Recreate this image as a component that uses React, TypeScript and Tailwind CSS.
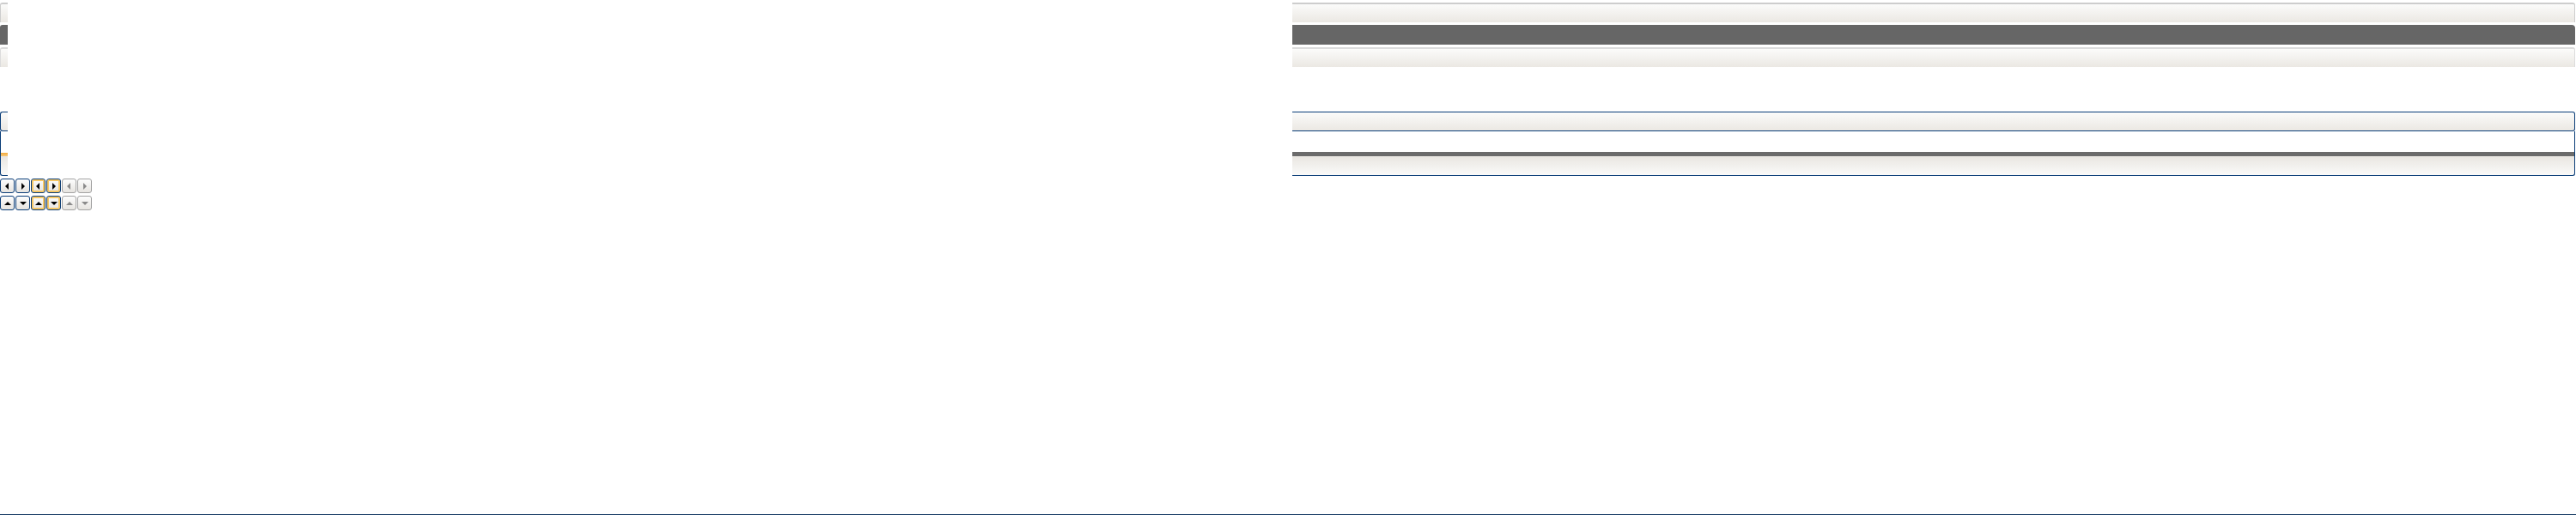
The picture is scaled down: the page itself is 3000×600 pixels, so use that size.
import React from "react";

// sprite-like strips: left cap + long bar
const light = "bg-gradient-to-b from-[#fbfbfa] to-[#ebe8e3]";
const lightUp = "bg-gradient-to-b from-[#e9e6e1] to-[#fafaf9]";
const navy = "border-[#0a3d78]";

type Dir = "left" | "right" | "up" | "down";
type Tone = "blue" | "orange" | "gray";

const Arrow: React.FC<{ dir: Dir; color: string }> = ({ dir, color }) => {
  const pts: Record<Dir, string> = {
    left: "6,2 6,10 2,6",
    right: "3,2 3,10 7,6",
    up: "1,8 9,8 5,4",
    down: "1,4 9,4 5,8",
  };
  return (
    <svg width="10" height="12" viewBox="0 0 10 12">
      <polygon points={pts[dir]} fill={color} />
    </svg>
  );
};

const ArrowButton: React.FC<{ dir: Dir; tone: Tone }> = ({ dir, tone }) => {
  const frame =
    tone === "gray"
      ? "border-[#a3a3a3]"
      : "border-[#0a3d78]";
  const inner = tone === "orange" ? "ring-2 ring-inset ring-[#f6c766]" : "";
  return (
    <div
      className={`w-[17px] h-[17px] border rounded-[3px] ${frame} ${inner} bg-gradient-to-b from-[#fdfdfd] to-[#e6e4e0] flex items-center justify-center`}
    >
      <Arrow dir={dir} color={tone === "gray" ? "#8a8a8a" : "#000"} />
    </div>
  );
};

const App: React.FC = () => {
  return (
    <div className="w-[3000px] h-[600px] bg-white flex flex-col">
      <div className="pt-[3px] flex flex-col gap-[3px]">
        {/* grey tabs */}
        <div className="flex h-[23px]">
          <div className={`w-[9px] border-t-2 border-l border-[#cdcdcd] rounded-tl-[3px] ${light}`} />
          <div className="w-[1496px]" />
          <div className={`flex-1 mr-[1px] border-t-2 border-r border-[#cdcdcd] rounded-tr-[3px] ${light}`} />
        </div>
        <div className="flex h-[23px]">
          <div className="w-[9px] bg-[#666666] rounded-tl-[3px]" />
          <div className="w-[1496px]" />
          <div className="flex-1 mr-[1px] bg-[#666666] rounded-tr-[4px]" />
        </div>
        <div className="flex h-[23px]">
          <div className={`w-[9px] border-t-2 border-l border-[#dcdcdc] rounded-tl-[3px] ${light}`} />
          <div className="w-[1496px]" />
          <div className={`flex-1 mr-[1px] border-t-2 border-r border-[#dcdcdc] rounded-tr-[3px] ${light}`} />
        </div>
      </div>

      {/* blue framed strips */}
      <div className="mt-[52px] flex flex-col">
        <div className="flex h-[23px]">
          <div className={`w-[9px] border border-r-0 ${navy} rounded-l-[3px] ${light}`} />
          <div className="w-[1496px]" />
          <div className={`flex-1 mr-[1px] border border-l-0 ${navy} rounded-r-[3px] ${light}`} />
        </div>
        <div className="flex h-[29px]">
          <div className={`w-[9px] border-l ${navy} flex flex-col justify-end`}>
            <div className="h-[4px] bg-gradient-to-b from-[#f0a93a] to-[#f7c97a]" />
          </div>
          <div className="w-[1496px]" />
          <div className={`flex-1 mr-[1px] border-r ${navy} flex flex-col justify-end`}>
            <div className="h-[5px] bg-[#6b6b6b]" />
          </div>
        </div>
        <div className="flex h-[23px]">
          <div className={`w-[9px] border-l border-b ${navy} rounded-bl-[3px] ${lightUp}`} />
          <div className="w-[1496px]" />
          <div className={`flex-1 mr-[1px] border-r border-b ${navy} rounded-br-[3px] ${lightUp}`} />
        </div>
      </div>

      {/* arrow buttons */}
      <div className="mt-[3px] flex flex-col gap-[3px]">
        <div className="flex gap-[1px]">
          <ArrowButton dir="left" tone="blue" />
          <ArrowButton dir="right" tone="blue" />
          <ArrowButton dir="left" tone="orange" />
          <ArrowButton dir="right" tone="orange" />
          <ArrowButton dir="left" tone="gray" />
          <ArrowButton dir="right" tone="gray" />
        </div>
        <div className="flex gap-[1px]">
          <ArrowButton dir="up" tone="blue" />
          <ArrowButton dir="down" tone="blue" />
          <ArrowButton dir="up" tone="orange" />
          <ArrowButton dir="down" tone="orange" />
          <ArrowButton dir="up" tone="gray" />
          <ArrowButton dir="down" tone="gray" />
        </div>
      </div>

      <div className="mt-auto h-px bg-[#163a63]" />
    </div>
  );
};

export default App;
